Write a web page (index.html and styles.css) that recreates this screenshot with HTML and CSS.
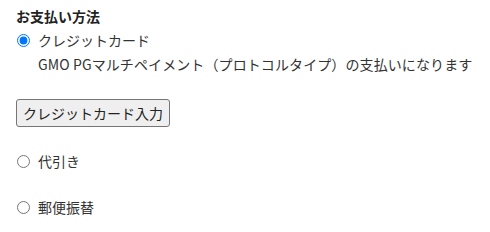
FILE: index.html
```html
<!DOCTYPE html>
<html lang="ja">
  <head>
    <meta charset="UTF-8" />
    <title>お支払い方法</title>
    <link rel="stylesheet" href="styles.css">
  </head>
  <body>
    <div class="payment">
      <h3 class="payment-title">お支払い方法</h3>

      <label class="option">
        <input type="radio" name="payment" class="option-radio" checked />
        クレジットカード
      </label>
      <p class="option-note">GMO PGマルチペイメント（プロトコルタイプ）の支払いになります</p>
      <button class="card-button" type="button">クレジットカード入力</button>

      <label class="option option-cod">
        <input type="radio" name="payment" class="option-radio" />
        代引き
      </label>

      <label class="option option-postal">
        <input type="radio" name="payment" class="option-radio" />
        郵便振替
      </label>
    </div>
  </body>
</html>
```

FILE: styles.css
```css
/* General Styles */
body {
  margin: 0;
  background-color: #fff;
  font-family: "Noto Sans CJK JP", "Noto Sans", sans-serif;
  font-size: 14px;
  color: #333;
}

.payment {
  padding: 6px 16px;
  display: flex;
  flex-direction: column;
  align-items: flex-start;
}

.payment-title {
  margin: 0;
  font-size: 14px;
  font-weight: bold;
  line-height: 20px;
  color: #222;
}

/* Radio rows */
.option {
  display: flex;
  align-items: center;
  height: 20px;
  margin-top: 4px;
  cursor: pointer;
}

.option-radio {
  width: 13px;
  height: 13px;
  margin: 0 8px 0 1px;
}

.option-note {
  margin: 4px 0 0 22px;
  line-height: 20px;
  letter-spacing: 0.1px;
}

.card-button {
  margin-top: 25px;
  height: 28px;
  padding: 0 6px;
  font-family: inherit;
  font-size: 14px;
  color: #222;
  background-color: #efefef;
  border: 1px solid #767676;
  border-radius: 3px;
}

.option-cod {
  margin-top: 24px;
}

.option-postal {
  margin-top: 26px;
}
```
